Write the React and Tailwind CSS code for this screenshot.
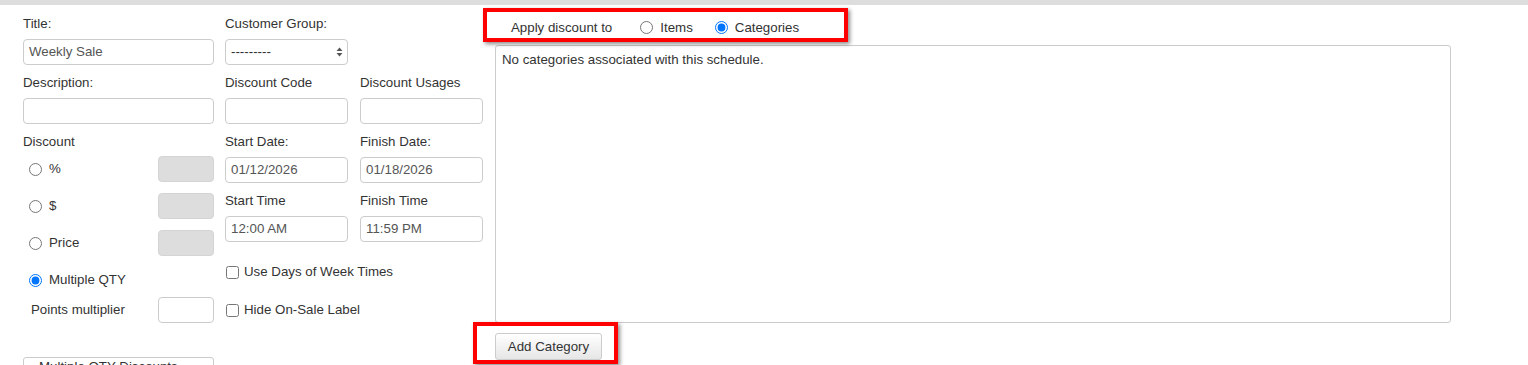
import React from 'react';

const font = { fontFamily: '"Liberation Sans", Arial, sans-serif' };

function Field({ label, value = '', className = '' }) {
  return (
    <div className={className}>
      <div className="h-5 leading-5">{label}</div>
      <div className="mt-[5px] h-[26px] rounded-[4px] border border-[#ccc] bg-white px-[5px] leading-[24px] text-[#555]">
        {value}
      </div>
    </div>
  );
}

function Radio({ checked = false, name }) {
  return (
    <input
      type="radio"
      defaultChecked={checked}
      className="m-0 h-[13px] w-[13px] shrink-0"
      name={name}
    />
  );
}

function DiscountRow({ label, checked }) {
  return (
    <div className="flex h-[26px] items-center justify-between">
      <label className="flex items-center gap-[7px] pl-[6px]">
        <Radio name="discount" checked={checked} />
        <span>{label}</span>
      </label>
      <div className="h-[26px] w-[56px] rounded-[4px] border border-[#d4d4d4] bg-[#dddddd]" />
    </div>
  );
}

function Check({ label }) {
  return (
    <label className="flex h-5 items-center gap-[5px] pl-px">
      <input type="checkbox" className="m-0 h-[13px] w-[13px]" />
      <span>{label}</span>
    </label>
  );
}

export default function App() {
  return (
    <div style={font} className="relative h-[365px] w-[1528px] overflow-hidden bg-white text-[13.3px] text-[#333]">
      <div className="h-[5px] bg-[#dddddd]" />

      <div className="flex items-start pl-[23px] pt-[9px]">
        {/* left column */}
        <div className="w-[191px]">
          <Field label="Title:" value="Weekly Sale" />
          <Field label="Description:" className="mt-[8px]" />
          <div className="mt-[8px] h-5 leading-5">Discount</div>
          <div className="mt-[4px] flex flex-col gap-[11px]">
            <DiscountRow label="%" />
            <DiscountRow label="$" />
            <DiscountRow label="Price" />
            <div className="flex h-[26px] items-center">
              <label className="flex items-center gap-[7px] pl-[6px]">
                <Radio name="discount" checked />
                <span>Multiple QTY</span>
              </label>
            </div>
          </div>
          <div className="mt-[4px] flex h-[26px] items-center justify-between">
            <span className="pl-[8px]">Points multiplier</span>
            <div className="h-[26px] w-[56px] rounded-[4px] border border-[#ccc] bg-white" />
          </div>
          <div className="mt-[34px] h-[26px] rounded-[3px] border border-[#ccc] bg-white pl-[15px] pt-[1px] leading-[16px]">
            Multiple QTY Discounts
          </div>
        </div>

        {/* middle columns */}
        <div className="ml-[11px] grid w-[258px] grid-cols-[123px_123px] content-start gap-x-[12px] gap-y-[8px]">
          <div>
            <div className="h-5 leading-5">Customer Group:</div>
            <div className="mt-[5px] flex h-[26px] items-center justify-between rounded-[4px] border border-[#ccc] bg-white pl-[5px] pr-[4px]">
              <span>---------</span>
              <svg width="7" height="10" viewBox="0 0 7 10">
                <path d="M3.5 0.5 L6.5 4 L0.5 4 Z" fill="#555" />
                <path d="M0.5 6 L6.5 6 L3.5 9.5 Z" fill="#555" />
              </svg>
            </div>
          </div>
          <div />
          <Field label="Discount Code" />
          <Field label="Discount Usages" />
          <Field label="Start Date:" value="01/12/2026" />
          <Field label="Finish Date:" value="01/18/2026" />
          <Field label="Start Time" value="12:00 AM" />
          <Field label="Finish Time" value="11:59 PM" />
          <div className="col-span-2 mt-[12px] flex flex-col gap-[18px]">
            <Check label="Use Days of Week Times" />
            <Check label="Hide On-Sale Label" />
          </div>
        </div>

        {/* right panel */}
        <div className="-mt-[6px] ml-[12px] w-[956px]">
          <div className="relative flex h-[34px] items-center pl-[16px] pt-[5px]">
            <div className="pointer-events-none absolute left-[-12px] top-0 h-[34px] w-[365px] border-[4px] border-[#ff0000] shadow-[2px_2px_4px_rgba(0,0,0,0.45)]" />
            <span>Apply discount to</span>
            <label className="ml-[28px] flex items-center gap-[7px]">
              <Radio name="apply" />
              <span>Items</span>
            </label>
            <label className="ml-[22px] flex items-center gap-[7px]">
              <Radio name="apply" checked />
              <span>Categories</span>
            </label>
          </div>
          <div className="mt-[3px] h-[278px] rounded-[3px] border border-[#ccc] px-[6px] pt-[4px]">
            No categories associated with this schedule.
          </div>
          <div className="relative mt-[10px] w-[107px]">
            <div className="pointer-events-none absolute left-[-22px] top-[-11px] h-[42px] w-[145px] border-[4px] border-[#ff0000] shadow-[2px_2px_4px_rgba(0,0,0,0.45)]" />
            <button className="h-[27px] w-[107px] rounded-[3px] border border-[#ccc] bg-gradient-to-b from-white to-[#e6e6e6] text-[#333]">
              Add Category
            </button>
          </div>
        </div>
      </div>
    </div>
  );
}
